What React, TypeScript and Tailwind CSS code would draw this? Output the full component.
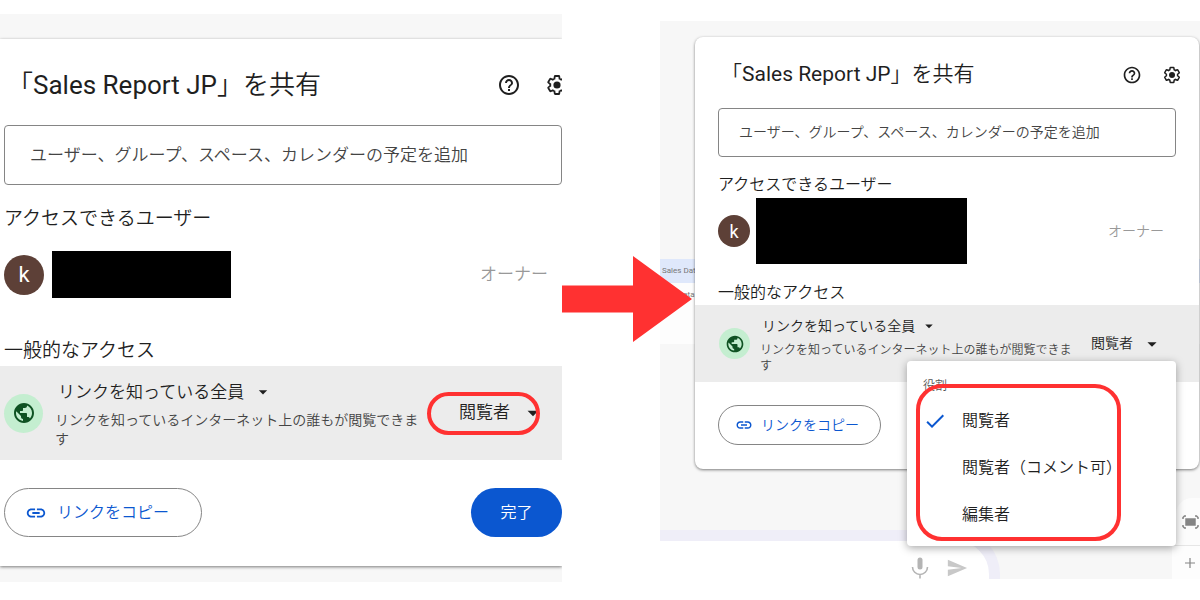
import { useState } from "react";
import type { ReactNode } from "react";
import { MdArrowDropDown, MdCheck, MdHelpOutline, MdLink, MdPublic, MdSend } from "react-icons/md";

const ROLES = ["閲覧者", "閲覧者（コメント可）", "編集者"];

const GEAR =
  "M19.43 12.98c.04-.32.07-.64.07-.98 0-.34-.03-.66-.07-.98l2.11-1.65c.19-.15.24-.42.12-.64l-2-3.46c-.09-.16-.26-.25-.44-.25-.06 0-.12.01-.17.03l-2.49 1c-.52-.4-1.08-.73-1.69-.98l-.38-2.65C14.46 2.18 14.25 2 14 2h-4c-.25 0-.46.18-.49.42l-.38 2.65c-.61.25-1.17.59-1.69.98l-2.49-1c-.06-.02-.12-.03-.18-.03-.17 0-.34.09-.43.25l-2 3.46c-.13.22-.07.49.12.64l2.11 1.65c-.04.32-.07.65-.07.98 0 .33.03.66.07.98l-2.11 1.65c-.19.15-.24.42-.12.64l2 3.46c.09.16.26.25.44.25.06 0 .12-.01.17-.03l2.49-1c.52.4 1.08.73 1.69.98l.38 2.65c.03.24.24.42.49.42h4c.25 0 .46-.18.49-.42l.38-2.65c.61-.25 1.17-.59 1.69-.98l2.49 1c.06.02.12.03.18.03.17 0 .34-.09.43-.25l2-3.46c.12-.22.07-.49-.12-.64l-2.11-1.65z";

function GearIcon({ className }: { className: string }) {
  return (
    <svg className={className} viewBox="0 0 24 24">
      <path d={GEAR} fill="none" stroke="currentColor" strokeWidth={2} transform="translate(1.2 1.2) scale(.9)" />
      <circle cx="12" cy="12" r="3.6" fill="currentColor" />
    </svg>
  );
}

// the same dialog is shown twice, once zoomed in and once at normal size
const large = {
  pad: "pl-1",
  header: "h-[86px] pt-1.5 pl-[7px]",
  title: "text-[26px]",
  tools: "gap-6 -mr-[7px]",
  tool: "size-6",
  input: "h-15 text-[17px] pl-[25px] pr-4 pb-px",
  heading: "text-[19px] leading-7",
  people: "mt-5",
  user: "mt-[18px] gap-2 pr-[14px]",
  avatar: "size-10 text-[22px]",
  redacted: "w-[179px] h-[47px]",
  owner: "text-[17px]",
  general: "mt-[39px]",
  access: "mt-px h-[94px] pl-1 pr-4",
  globe: "size-[39px]",
  globeIcon: "size-6",
  texts: "pt-[14px] pl-3",
  link: "text-[17px] leading-6 gap-2 pl-[3px]",
  linkCaret: "size-5",
  desc: "mt-[7px] w-[376px] text-[14px] leading-[19px]",
  footer: "mt-7 pb-[29px]",
  copy: "h-[49px] w-[198px] text-[16px] gap-[10px] pl-5",
  copyIcon: "size-[22px]",
};

const small: typeof large = {
  pad: "px-[23px]",
  header: "h-[71px] pt-[5px] pl-[26px] pr-[17px]",
  title: "text-[21px]",
  tools: "gap-5",
  tool: "size-5",
  input: "h-[49px] text-[14px] pl-5 pr-4 pb-0.5",
  heading: "text-[16px] leading-6",
  people: "mt-4",
  user: "mt-px gap-[6px] pr-3",
  avatar: "size-8 text-[18px]",
  redacted: "w-[211px] h-[66px]",
  owner: "text-[14px]",
  general: "mt-[17px]",
  access: "h-[77px] pl-6 pr-[36px]",
  globe: "size-[31px]",
  globeIcon: "size-5",
  texts: "pt-[11px] pl-[10px]",
  link: "text-[14px] leading-5 gap-1 pl-[2px]",
  linkCaret: "size-[18px]",
  desc: "mt-[6px] w-[314px] text-[12px] leading-4",
  footer: "mt-[23px] pb-6",
  copy: "h-10 w-[163px] text-[14px] gap-2 pl-4",
  copyIcon: "size-[18px]",
};

interface ShareBodyProps {
  s: typeof large;
  role: ReactNode;
  done?: ReactNode;
}

function ShareBody({ s, role, done }: ShareBodyProps) {
  return (
    <>
      <header className={`flex items-center justify-between ${s.header}`}>
        <h1 className={`whitespace-nowrap ${s.title}`}>「<span className="font-normal">Sales Report JP</span>」を共有</h1>
        <div className={`flex shrink-0 items-center ${s.tools}`}>
          <button type="button" aria-label="ヘルプ"><MdHelpOutline className={s.tool} /></button>
          <button type="button" aria-label="設定"><GearIcon className={s.tool} /></button>
        </div>
      </header>
      <div className={s.pad}>
        <input aria-label="ユーザーを追加" placeholder="ユーザー、グループ、スペース、カレンダーの予定を追加"
          className={`block w-full rounded border border-[#858585] bg-white placeholder:text-[#444] focus:outline-none ${s.input}`} />
        <h2 className={`font-[350] ${s.heading} ${s.people}`}>アクセスできるユーザー</h2>
        <div className={`flex items-center ${s.user}`}>
          <span className={`flex shrink-0 items-center justify-center rounded-full bg-[#5d4037] font-normal text-white ${s.avatar}`}>k</span>
          <span className={`bg-black ${s.redacted}`} />
          <span className={`ml-auto text-[#999] ${s.owner}`}>オーナー</span>
        </div>
        <h2 className={`font-[350] ${s.heading} ${s.general}`}>一般的なアクセス</h2>
      </div>
      <div className={`flex items-center bg-[#ececec] ${s.access}`}>
        <span className={`flex shrink-0 items-center justify-center rounded-full bg-[#c4eed0] ${s.globe}`}>
          <MdPublic className={`text-[#0f5223] ${s.globeIcon}`} />
        </span>
        <div className={`self-start shrink-0 ${s.texts}`}>
          <div className={`flex items-center ${s.link}`}>
            <select aria-label="アクセス範囲" className="appearance-none bg-transparent focus:outline-none">
              <option>リンクを知っている全員</option>
            </select>
            <MdArrowDropDown className={`pointer-events-none ${s.linkCaret}`} />
          </div>
          <p className={`text-[#444] ${s.desc}`}>リンクを知っているインターネット上の誰もが閲覧できます</p>
        </div>
        {role}
      </div>
      <footer className={`flex items-center justify-between ${s.pad} ${s.footer}`}>
        <button type="button" className={`flex items-center rounded-full border border-[#858585] whitespace-nowrap text-[#0b57d0] ${s.copy}`}>
          <MdLink className={s.copyIcon} />
          リンクをコピー
        </button>
        {done}
      </footer>
    </>
  );
}

function RoleMenu({ role, onPick }: { role: string; onPick: (r: string) => void }) {
  return (
    <div role="menu" className="absolute top-[324px] right-[23px] w-[269px] rounded bg-white pt-[14px] pb-2 shadow-[0_2px_8px_rgba(0,0,0,0.35)]">
      <p className="pl-4 text-[12px] leading-[22px] text-[#555]">役割</p>
      {ROLES.map((r) => (
        <button key={r} type="button" role="menuitemradio" aria-checked={r === role} onClick={() => onPick(r)}
          className="flex h-[47px] w-full items-center gap-[15px] pl-4 text-[16px] whitespace-nowrap">
          <span className="w-6">{r === role && <MdCheck className="size-6 text-[#0b57d0]" />}</span>
          {r}
        </button>
      ))}
      <div className="pointer-events-none absolute top-[23px] left-[9px] h-[157px] w-[205px] rounded-[26px] border-4 border-[#ff3131]" />
    </div>
  );
}

// the spreadsheet and chat window that sit behind the dialog
function Backdrop() {
  return (
    <div className="col-start-1 row-start-1 flex min-w-0 flex-col bg-[#f7f7f7] pt-[238px] font-normal">
      <div className="h-6 bg-[#dfe8fb] pl-[2px] text-[8px] leading-6 text-[#777]">Sales Data</div>
      <div className="h-[61px] bg-[#fdfdfd] pl-[18px] text-[8px] leading-6 text-[#777]">Data</div>
      <div className="mt-auto flex items-end">
        <div className="flex h-[49px] w-[340px] justify-end gap-4 overflow-hidden rounded-tr-[44px] border-t-[11px] border-r-[11px] border-[#efeef8] bg-white pr-[21px] text-[#b4b4b4]">
          <svg className="mt-[15px] h-[23px] w-5" viewBox="0 0 20 23" fill="none" stroke="currentColor">
            <path d="M10 4v7" strokeWidth="5" strokeLinecap="round" />
            <path d="M2.5 11a7.5 7.5 0 0 0 15 0M10 18.500v4" strokeWidth="1.600" />
          </svg>
          <MdSend className="mt-4 size-[22px] text-[#c8c8c8]" />
        </div>
        <div className="ml-auto flex w-7 flex-col text-[#858585]">
          <div className="ml-1 flex h-[47px] items-center justify-center rounded-tl-2xl bg-[#fcfcfc] pl-1">
            <svg className="h-[14px] w-[17px]" viewBox="0 0 17 14" fill="none" stroke="currentColor" strokeWidth="1.500">
              <path d="M1 4V2.500L2.500 1H4M13 1h1.500L16 2.500V4M16 10v1.500L14.500 13H13M4 13H2.500L1 11.500V10" />
              <rect x="4" y="4" width="9" height="6" fill="currentColor" />
            </svg>
          </div>
          <div className="flex h-[34px] items-center justify-center border-t border-[#e6e6e6] bg-[#fdfdfd] pl-2">
            <svg className="size-3" viewBox="0 0 12 12" stroke="currentColor" strokeWidth="1.200">
              <path d="M6 1v10M1 6h10" />
            </svg>
          </div>
        </div>
      </div>
    </div>
  );
}

export default function App() {
  const [role, setRole] = useState(ROLES[0]);

  return (
    <main className="grid grid-cols-[562fr_98fr_540fr] items-start overflow-hidden bg-white font-[350] text-[#1f1f1f] font-['Roboto','Noto_Sans_CJK_JP',sans-serif]">
      <section className="mt-[14px] min-w-0 overflow-hidden bg-[#f7f7f7] pt-[25px] pb-4">
        <div className="bg-white shadow-[0_1px_3px_rgba(0,0,0,0.5)]">
          <ShareBody s={large}
            role={
              <div className="relative ml-auto flex shrink-0 items-center gap-[10px] text-[17px]">
                <select aria-label="役割" className="appearance-none bg-transparent focus:outline-none">
                  <option>閲覧者</option>
                </select>
                <MdArrowDropDown className="pointer-events-none size-[26px]" />
                <div className="pointer-events-none absolute -top-2 -left-8 h-[43px] w-[113px] rounded-full border-4 border-[#ff3131]" />
              </div>
            }
            done={<button type="button" className="h-[49px] w-[91px] rounded-full bg-[#0b57d0] text-[16px] text-white">完了</button>}
          />
        </div>
      </section>

      <div className="relative z-10 min-w-0 pt-64">
        <svg className="h-[86px] w-[130px]" viewBox="0 0 130 86" fill="#ff3131">
          <path d="M0 29.500h71V0l59 43-59 43V56.500H0z" />
        </svg>
      </div>

      <section className="mt-[21px] grid min-w-0 grid-cols-1 overflow-hidden pb-[21px]">
        <Backdrop />
        <div className="relative col-start-1 row-start-1 mt-4 mr-px mb-[110px] ml-[35px] rounded-lg bg-white shadow-[0_1px_3px_rgba(0,0,0,0.5)]">
          <ShareBody s={small}
            role={
              <button type="button" aria-haspopup="menu" aria-expanded="true" className="ml-auto flex shrink-0 items-center gap-2 text-[14px] whitespace-nowrap">
                {role}
                <MdArrowDropDown className="size-[22px]" />
              </button>
            }
          />
          <RoleMenu role={role} onPick={setRole} />
        </div>
      </section>
    </main>
  );
}
